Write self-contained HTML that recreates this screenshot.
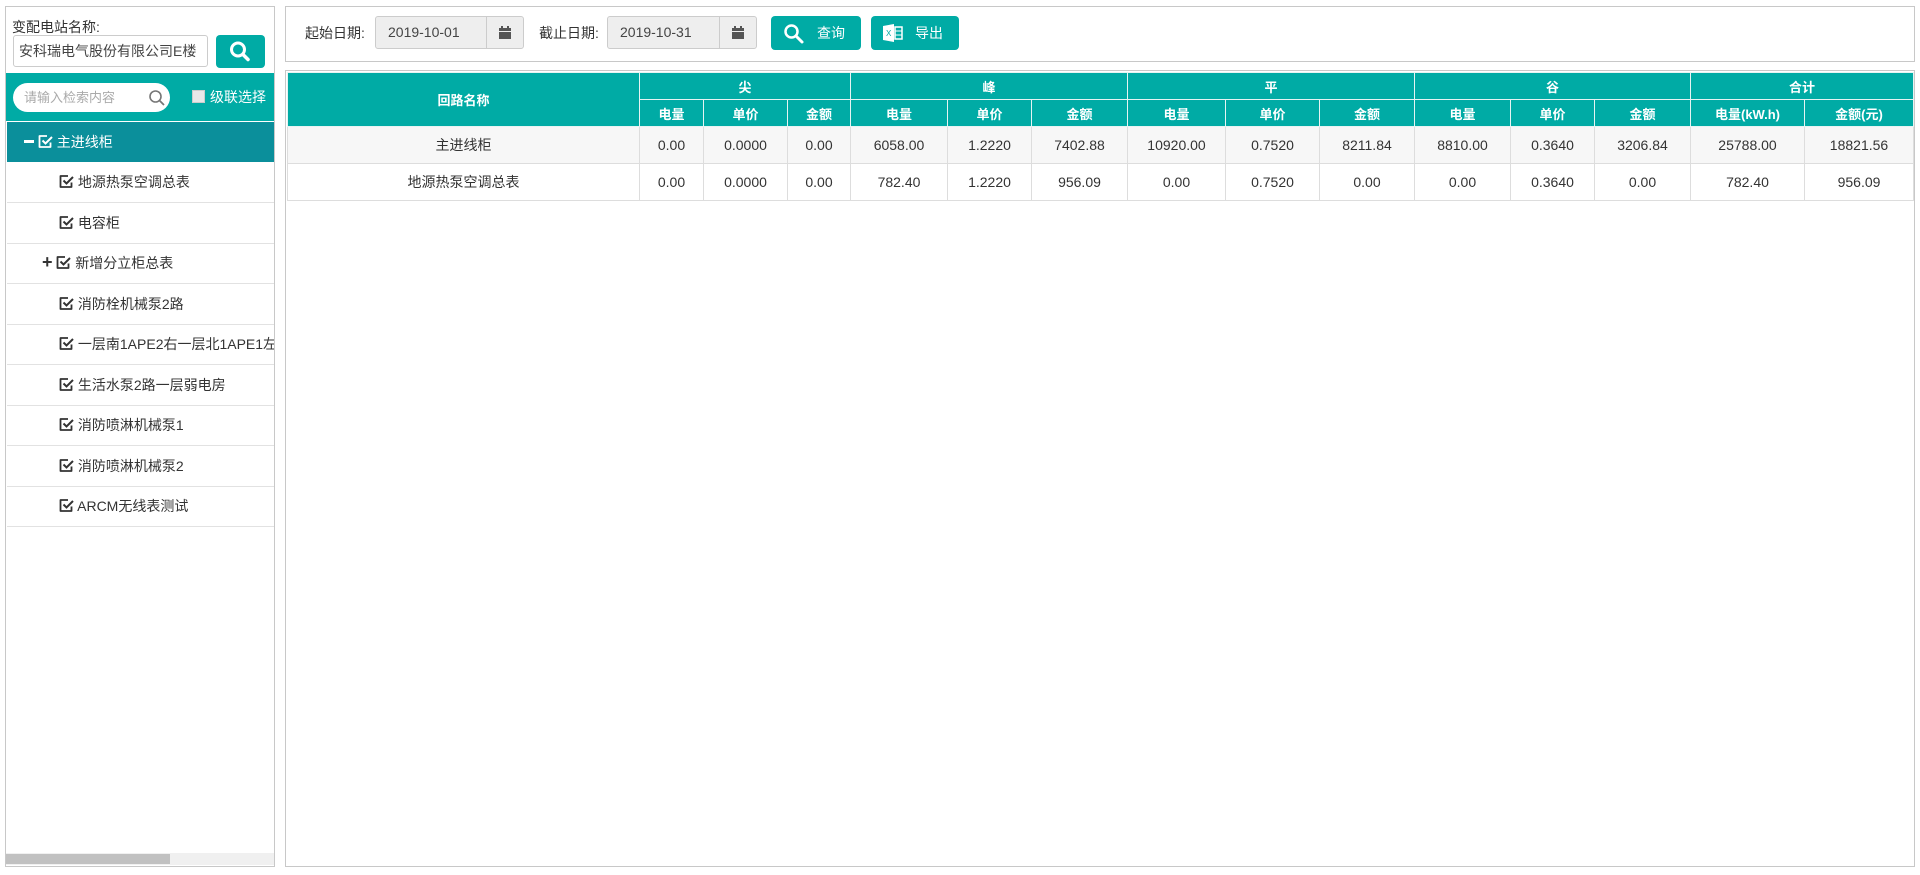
<!DOCTYPE html>
<html><head><meta charset="utf-8"><style>
*{box-sizing:border-box;margin:0;padding:0}
body{width:1920px;height:875px;background:#fff;font-family:"Liberation Sans","Noto Sans CJK SC",sans-serif;font-size:14px;color:#333;position:relative;overflow:hidden}
.abs{position:absolute}
.panel{border:1px solid #c8c8c8;background:#fff}
.btn{background:#00aba5;border-radius:4px;color:#fff}
.row{position:absolute;left:1px;width:267px;height:41px;border-bottom:1px solid #e2e2e2;line-height:40px;font-size:14px;color:#333}
.ck{display:inline-block;vertical-align:middle;margin-top:-3px}
table{border-collapse:collapse;position:absolute;left:287px;top:72px;width:1626px;table-layout:fixed}
th{background:#00aba5;color:#fff;font-weight:bold;font-size:13px;border:1px solid #e6f4f3;text-align:center}
td{text-align:center;border:1px solid #ddd;font-size:14px;color:#333;height:37px}
tr.r1 td{background:#f7f7f7}
</style></head><body>
<div class="abs panel" style="left:5px;top:6px;width:270px;height:861px">
  <div class="abs" style="left:6px;top:10px;font-size:14px;color:#333">变配电站名称:</div>
  <div class="abs" style="left:7px;top:28px;width:195px;height:32px;border:1px solid #ccc;border-radius:3px;line-height:30px;padding-left:5px;font-size:14px;color:#444;white-space:nowrap;overflow:hidden">安科瑞电气股份有限公司E楼</div>
  <div class="abs btn" style="left:210px;top:28px;width:49px;height:33px">
    <svg width="49" height="33" viewBox="0 0 49 33"><circle cx="22" cy="14.5" r="6.5" fill="none" stroke="#fff" stroke-width="3"/><line x1="27" y1="19.5" x2="32" y2="24.5" stroke="#fff" stroke-width="3.5" stroke-linecap="round"/></svg>
  </div>
  <div class="abs" style="left:0;top:66px;width:268px;height:48px;background:#00aba5"></div>
  <div class="abs" style="left:7px;top:76px;width:157px;height:29px;background:#fff;border-radius:15px;line-height:29px;padding-left:11px;font-size:13px;color:#aaa">请输入检索内容
    <svg class="abs" style="left:135px;top:6px" width="18" height="18" viewBox="0 0 18 18"><circle cx="7.5" cy="7.5" r="5.5" fill="none" stroke="#777" stroke-width="1.6"/><line x1="11.5" y1="11.5" x2="16" y2="16" stroke="#777" stroke-width="1.8"/></svg>
  </div>
  <div class="abs" style="left:186px;top:83px;width:13px;height:13px;background:#e8e8e8;border:1px solid #ccc"></div>
  <div class="abs" style="left:204px;top:80px;color:#fff;font-size:14px">级联选择</div>
  <div class="abs" style="left:1px;top:115px;width:267px;height:40px;background:#0b8f9b"></div>
  <div class="row" style="top:115px;color:#fff;border:none;padding-left:17px"><span style="display:inline-block;width:10px;height:3px;background:#fff;vertical-align:middle;margin-top:-3px"></span> <svg class="ck" width="15" height="15" viewBox="0 0 15 15"><path d="M12.5 8.5v4.5H1.5V2H9" fill="none" stroke="#fff" stroke-width="1.8" stroke-linejoin="round"/><path d="M4.5 6.5l3 3L14 3" fill="none" stroke="#fff" stroke-width="2"/></svg> 主进线柜</div>
  <div class="row" style="top:155px;padding-left:52px"><svg class="ck" width="15" height="15" viewBox="0 0 15 15"><path d="M12.5 8.5v4.5H1.5V2H9" fill="none" stroke="#333" stroke-width="1.8" stroke-linejoin="round"/><path d="M4.5 6.5l3 3L14 3" fill="none" stroke="#333" stroke-width="2"/></svg> 地源热泵空调总表</div>
  <div class="row" style="top:196px;padding-left:52px"><svg class="ck" width="15" height="15" viewBox="0 0 15 15"><path d="M12.5 8.5v4.5H1.5V2H9" fill="none" stroke="#333" stroke-width="1.8" stroke-linejoin="round"/><path d="M4.5 6.5l3 3L14 3" fill="none" stroke="#333" stroke-width="2"/></svg> 电容柜</div>
  <div class="row" style="top:236px;padding-left:35px"><span style="font-weight:bold;font-size:18px;vertical-align:middle;margin-top:-4px;display:inline-block">+</span> <svg class="ck" width="15" height="15" viewBox="0 0 15 15"><path d="M12.5 8.5v4.5H1.5V2H9" fill="none" stroke="#333" stroke-width="1.8" stroke-linejoin="round"/><path d="M4.5 6.5l3 3L14 3" fill="none" stroke="#333" stroke-width="2"/></svg> 新增分立柜总表</div>
  <div class="row" style="top:277px;padding-left:52px"><svg class="ck" width="15" height="15" viewBox="0 0 15 15"><path d="M12.5 8.5v4.5H1.5V2H9" fill="none" stroke="#333" stroke-width="1.8" stroke-linejoin="round"/><path d="M4.5 6.5l3 3L14 3" fill="none" stroke="#333" stroke-width="2"/></svg> 消防栓机械泵2路</div>
  <div class="row" style="top:317px;padding-left:52px;white-space:nowrap;overflow:hidden"><svg class="ck" width="15" height="15" viewBox="0 0 15 15"><path d="M12.5 8.5v4.5H1.5V2H9" fill="none" stroke="#333" stroke-width="1.8" stroke-linejoin="round"/><path d="M4.5 6.5l3 3L14 3" fill="none" stroke="#333" stroke-width="2"/></svg> 一层南1APE2右一层北1APE1左</div>
  <div class="row" style="top:358px;padding-left:52px"><svg class="ck" width="15" height="15" viewBox="0 0 15 15"><path d="M12.5 8.5v4.5H1.5V2H9" fill="none" stroke="#333" stroke-width="1.8" stroke-linejoin="round"/><path d="M4.5 6.5l3 3L14 3" fill="none" stroke="#333" stroke-width="2"/></svg> 生活水泵2路一层弱电房</div>
  <div class="row" style="top:398px;padding-left:52px"><svg class="ck" width="15" height="15" viewBox="0 0 15 15"><path d="M12.5 8.5v4.5H1.5V2H9" fill="none" stroke="#333" stroke-width="1.8" stroke-linejoin="round"/><path d="M4.5 6.5l3 3L14 3" fill="none" stroke="#333" stroke-width="2"/></svg> 消防喷淋机械泵1</div>
  <div class="row" style="top:439px;padding-left:52px"><svg class="ck" width="15" height="15" viewBox="0 0 15 15"><path d="M12.5 8.5v4.5H1.5V2H9" fill="none" stroke="#333" stroke-width="1.8" stroke-linejoin="round"/><path d="M4.5 6.5l3 3L14 3" fill="none" stroke="#333" stroke-width="2"/></svg> 消防喷淋机械泵2</div>
  <div class="row" style="top:479px;padding-left:52px"><svg class="ck" width="15" height="15" viewBox="0 0 15 15"><path d="M12.5 8.5v4.5H1.5V2H9" fill="none" stroke="#333" stroke-width="1.8" stroke-linejoin="round"/><path d="M4.5 6.5l3 3L14 3" fill="none" stroke="#333" stroke-width="2"/></svg> ARCM无线表测试</div>
  <div class="abs" style="left:0;top:846px;width:268px;height:12px;background:#f0f0f0"></div>
  <div class="abs" style="left:0;top:847px;width:164px;height:10px;background:#c1c1c1"></div>
</div>
<div class="abs panel" style="left:285px;top:6px;width:1630px;height:56px"></div>
<div class="abs" style="left:305px;top:23px;font-size:14px">起始日期:</div>
<div class="abs" style="left:375px;top:16px;width:149px;height:33px;border:1px solid #ccc;border-radius:3px;background:#eee;line-height:31px;padding-left:12px;font-size:14px;color:#444">2019-10-01
  <div class="abs" style="left:110px;top:0;width:1px;height:31px;background:#ccc"></div>
  <svg class="abs" style="left:122px;top:9px" width="14" height="14" viewBox="0 0 14 14"><rect x="1" y="2" width="12" height="11" fill="#555"/><rect x="1" y="5" width="12" height="1" fill="#eee"/><rect x="3" y="0" width="2" height="3" fill="#555"/><rect x="9" y="0" width="2" height="3" fill="#555"/></svg>
</div>
<div class="abs" style="left:539px;top:23px;font-size:14px">截止日期:</div>
<div class="abs" style="left:607px;top:16px;width:150px;height:33px;border:1px solid #ccc;border-radius:3px;background:#eee;line-height:31px;padding-left:12px;font-size:14px;color:#444">2019-10-31
  <div class="abs" style="left:111px;top:0;width:1px;height:31px;background:#ccc"></div>
  <svg class="abs" style="left:123px;top:9px" width="14" height="14" viewBox="0 0 14 14"><rect x="1" y="2" width="12" height="11" fill="#555"/><rect x="1" y="5" width="12" height="1" fill="#eee"/><rect x="3" y="0" width="2" height="3" fill="#555"/><rect x="9" y="0" width="2" height="3" fill="#555"/></svg>
</div>
<div class="abs btn" style="left:771px;top:16px;width:90px;height:34px;line-height:34px;font-size:14px">
  <svg class="abs" style="left:12px;top:7px" width="22" height="22" viewBox="0 0 22 22"><circle cx="8.5" cy="8.5" r="6" fill="none" stroke="#fff" stroke-width="2.5"/><line x1="13" y1="13" x2="19" y2="19" stroke="#fff" stroke-width="3" stroke-linecap="round"/></svg>
  <span class="abs" style="left:46px;top:0">查询</span></div>
<div class="abs btn" style="left:871px;top:16px;width:88px;height:34px;line-height:34px;font-size:14px">
  <svg class="abs" style="left:12px;top:8px" width="20" height="18" viewBox="0 0 20 18"><path d="M0 2L11 0v18L0 16z" fill="#fff"/><rect x="12" y="3" width="7" height="12" fill="none" stroke="#fff" stroke-width="1.5"/><line x1="12" y1="7" x2="19" y2="7" stroke="#fff"/><line x1="12" y1="11" x2="19" y2="11" stroke="#fff"/><text x="3" y="12" font-size="8" fill="#00aba5" font-family="Liberation Sans">X</text></svg>
  <span class="abs" style="left:44px;top:0">导出</span></div>
<div class="abs panel" style="left:285px;top:70px;width:1630px;height:797px"></div>
<table>
<colgroup><col style="width:352px"><col style="width:64px"><col style="width:84px"><col style="width:63px"><col style="width:97px"><col style="width:84px"><col style="width:96px"><col style="width:98px"><col style="width:94px"><col style="width:95px"><col style="width:96px"><col style="width:84px"><col style="width:96px"><col style="width:114px"><col style="width:109px"></colgroup>
<tr style="height:27px"><th rowspan="2">回路名称</th><th colspan="3">尖</th><th colspan="3">峰</th><th colspan="3">平</th><th colspan="3">谷</th><th colspan="2">合计</th></tr>
<tr style="height:27px"><th>电量</th><th>单价</th><th>金额</th><th>电量</th><th>单价</th><th>金额</th><th>电量</th><th>单价</th><th>金额</th><th>电量</th><th>单价</th><th>金额</th><th>电量(kW.h)</th><th>金额(元)</th></tr>
<tr class="r1"><td>主进线柜</td><td>0.00</td><td>0.0000</td><td>0.00</td><td>6058.00</td><td>1.2220</td><td>7402.88</td><td>10920.00</td><td>0.7520</td><td>8211.84</td><td>8810.00</td><td>0.3640</td><td>3206.84</td><td>25788.00</td><td>18821.56</td></tr>
<tr><td>地源热泵空调总表</td><td>0.00</td><td>0.0000</td><td>0.00</td><td>782.40</td><td>1.2220</td><td>956.09</td><td>0.00</td><td>0.7520</td><td>0.00</td><td>0.00</td><td>0.3640</td><td>0.00</td><td>782.40</td><td>956.09</td></tr>
</table>
</body></html>
